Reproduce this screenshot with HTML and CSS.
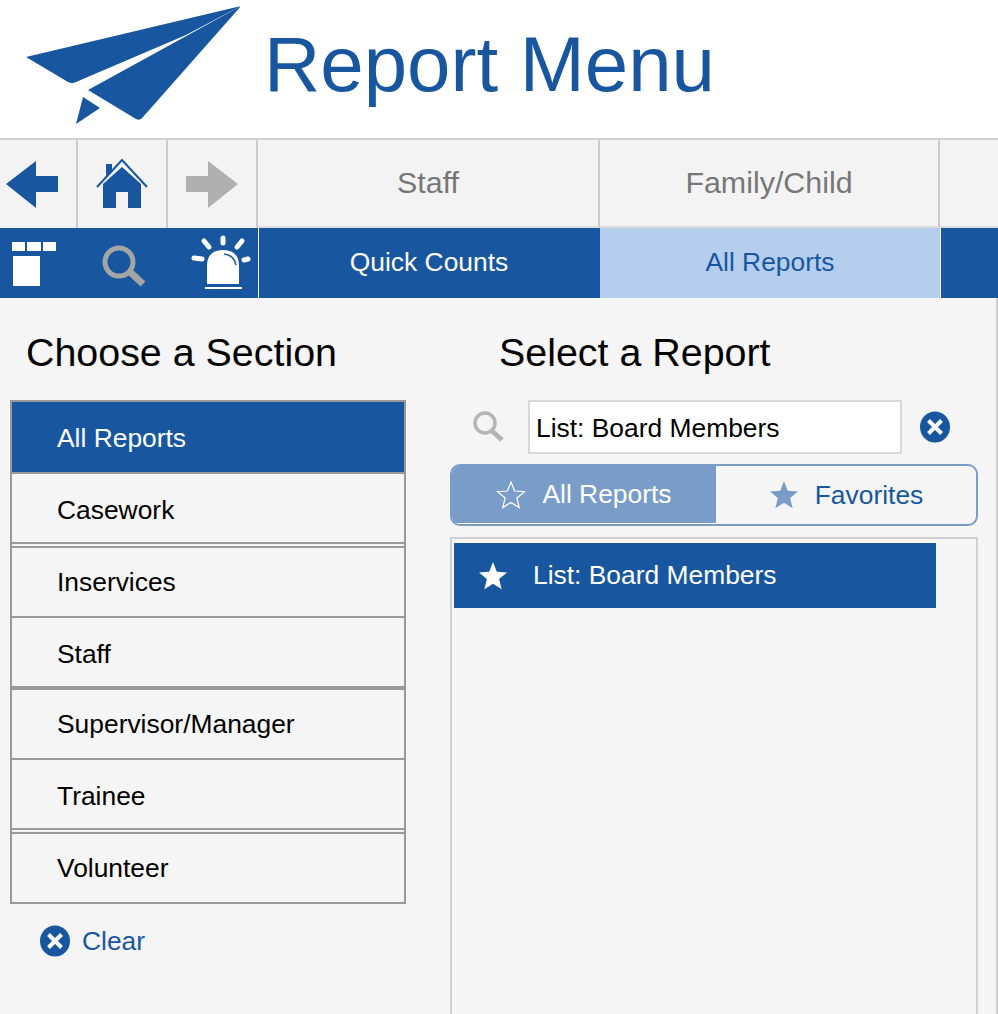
FILE: index.html
```html
<!DOCTYPE html>
<html lang="en">
<head>
  <meta charset="UTF-8" />
  <title>Report Menu</title>
  <link rel="stylesheet" href="styles.css">
</head>
<body>

  <header class="page-header">
    <svg class="logo" width="240" height="138" viewBox="0 0 240 138">
      <path d="M241 6 L26 57 L68 82 Q72 84 76 82 L186 35 Z" fill="#18579f" />
      <path d="M241 6 L88 90 L136 119 Q140 121 143 117 Z" fill="#18579f" />
      <path d="M83 97 L100 108 L76 124 Z" fill="#18579f" />
    </svg>
    <h1>Report Menu</h1>
  </header>

  <nav class="nav-top">
    <div class="nav-btn">
      <svg width="76" height="88" viewBox="0 140 76 88"><path d="M6 184 L36 161 V176 H58 V192 H36 V208 Z" fill="#18579f" /></svg>
    </div>
    <div class="nav-btn">
      <svg width="88" height="88" viewBox="78 140 88 88">
        <path d="M103 208 V184 L122 167 L141 184 V208 H128 V192 H116 V208 Z" fill="#18579f" />
        <path d="M97 187 L122 160 L147 187" fill="none" stroke="#18579f" stroke-width="2" />
        <path d="M106 164 H112 V172 L106 178 Z" fill="#18579f" />
      </svg>
    </div>
    <div class="nav-btn">
      <svg width="88" height="88" viewBox="168 140 88 88"><path d="M186 176 H208 V161 L238 184 L208 208 V192 H186 Z" fill="#b0b0b0" /></svg>
    </div>
    <div class="nav-tab">Staff</div>
    <div class="nav-tab">Family/Child</div>
    <div class="nav-tab nav-tab-end"></div>
  </nav>

  <nav class="nav-sub">
    <div class="tool">
      <svg width="78" height="70" viewBox="0 228 78 70" fill="#fff">
        <rect x="12" y="242" width="13" height="9" />
        <rect x="27" y="242" width="14" height="9" />
        <rect x="43" y="242" width="13" height="9" />
        <rect x="13" y="256" width="27" height="30" />
      </svg>
    </div>
    <div class="tool">
      <svg width="90" height="70" viewBox="78 228 90 70">
        <circle cx="119" cy="262" r="14" fill="none" stroke="#a5a5a5" stroke-width="5" />
        <path d="M130 272 L143 284" stroke="#a5a5a5" stroke-width="7" />
      </svg>
    </div>
    <div class="tool tool-last">
      <svg width="90" height="70" viewBox="168 228 90 70" fill="#fff">
        <path d="M207 284 V266 Q207 250 223 250 Q239 250 239 266 V284 Z" />
        <path d="M224 254 Q234 255 236 265" fill="none" stroke="#18579f" stroke-width="1.5" />
        <rect x="205" y="287" width="37" height="2" />
        <g stroke="#fff" stroke-width="5" stroke-linecap="round">
          <path d="M204 241 L209 247" />
          <path d="M223 238 V243" />
          <path d="M242 241 L237 247" />
          <path d="M194 258 L202 259" />
          <path d="M244 260 L248 259" />
        </g>
      </svg>
    </div>
    <div class="sub-tab">Quick Counts</div>
    <div class="sub-tab sub-tab-active">All Reports</div>
    <div></div>
  </nav>

  <main class="content">
    <section class="sections">
      <h2>Choose a Section</h2>
      <ul class="section-list">
        <li class="active">All Reports</li>
        <li class="double">Casework</li>
        <li>Inservices</li>
        <li class="thick">Staff</li>
        <li>Supervisor/Manager</li>
        <li class="double">Trainee</li>
        <li class="last">Volunteer</li>
      </ul>
      <div class="clear">
        <svg width="30" height="32" viewBox="0 0 30 32">
          <ellipse cx="15" cy="16" rx="15" ry="15.5" fill="#18579f" />
          <path d="M8.5 9.5 L21.5 22.5 M21.5 9.5 L8.5 22.5" stroke="#fff" stroke-width="4" />
        </svg>
        Clear
      </div>
    </section>

    <section class="reports">
      <h2>Select a Report</h2>
      <div class="search">
        <svg class="search-icon" width="36" height="36" viewBox="0 0 36 36">
          <circle cx="15" cy="14" r="10" fill="none" stroke="#b5b5b5" stroke-width="3.5" />
          <path d="M22 22 L32 31" stroke="#b5b5b5" stroke-width="5" />
        </svg>
        <div class="search-box">List: Board Members</div>
        <svg class="search-x" width="30" height="32" viewBox="0 0 30 32">
          <ellipse cx="15" cy="16" rx="15" ry="15.5" fill="#18579f" />
          <path d="M8.5 9.5 L21.5 22.5 M21.5 9.5 L8.5 22.5" stroke="#fff" stroke-width="4" />
        </svg>
      </div>
      <div class="tabs">
        <div class="tab tab-active">
          <svg width="30" height="30" viewBox="0 0 30 30"><path d="M15 2 L18.6 11 L28.5 11.7 L20.8 18 L23.3 27.6 L15 22.4 L6.7 27.6 L9.2 18 L1.5 11.7 L11.4 11 Z" fill="none" stroke="#fff" stroke-width="1.2" /></svg>
          All Reports
        </div>
        <div class="tab">
          <svg width="30" height="30" viewBox="0 0 30 30"><path d="M15 1 L18.8 10.8 L29 11.5 L21.1 18 L23.7 28.3 L15 22.7 L6.3 28.3 L8.9 18 L1 11.5 L11.2 10.8 Z" fill="#7a9cc9" /></svg>
          Favorites
        </div>
      </div>
      <div class="report-panel">
        <div class="report-row">
          <svg width="30" height="30" viewBox="0 0 30 30"><path d="M15 1 L18.8 10.8 L29 11.5 L21.1 18 L23.7 28.3 L15 22.7 L6.3 28.3 L8.9 18 L1 11.5 L11.2 10.8 Z" fill="#fff" /></svg>
          List: Board Members
        </div>
      </div>
    </section>
  </main>

</body>
</html>
```

FILE: styles.css
```css
* {
  margin: 0;
  padding: 0;
  box-sizing: border-box;
}

html, body {
  height: 100%;
  overflow: hidden;
}

body {
  display: flex;
  flex-direction: column;
  font-family: 'Liberation Sans', Arial, sans-serif;
  font-size: 26.4px;
  background-color: #f5f5f5;
  color: #000;
}

svg {
  display: block;
  flex-shrink: 0;
}

.page-header {
  height: 140px;
  display: flex;
  background: #fff;
  border-bottom: 2px solid #d0d0d0;
}

.page-header h1 {
  margin-left: 24px;
  font-size: 78px;
  font-weight: normal;
  line-height: 128px;
  color: #18579f;
}

.nav-top, .nav-sub {
  display: grid;
  grid-template-columns: 78px 90px 90px 342px 340px 1fr;
}

.nav-top {
  height: 88px;
  background: #f3f3f3;
}

.nav-btn {
  border-right: 2px solid #cccccc;
}

.nav-tab {
  display: flex;
  align-items: center;
  justify-content: center;
  padding-bottom: 2px;
  border-right: 2px solid #cccccc;
  border-bottom: 2px solid #dddddd;
  font-size: 30.4px;
  color: #777777;
}

.nav-tab-end {
  border-right: none;
}

.nav-sub {
  height: 70px;
  background: #18579f;
}

.tool-last {
  border-right: 1px solid #fff;
  width: 91px;
}

.sub-tab {
  display: flex;
  align-items: center;
  justify-content: center;
  padding-bottom: 2px;
  color: #fff;
}

.sub-tab-active {
  background: #b5ceee;
  color: #18579f;
  border-right: 1px solid #fff;
  width: 341px;
}

.content {
  flex: 1;
  display: flex;
  min-height: 0;
  border-right: 2px solid #d0d0d0;
}

h2 {
  font-size: 39.4px;
  font-weight: normal;
  line-height: 46px;
}

.sections {
  width: 450px;
  padding: 31px 0 0 10px;
}

.sections h2 {
  margin-left: 16px;
}

.section-list {
  width: 396px;
  margin-top: 25px;
  list-style: none;
  border: 2px solid #999999;
}

.section-list li {
  height: 70px;
  padding-left: 45px;
  line-height: 68px;
  border-bottom: 2px solid #999999;
}

.section-list li:first-child,
.section-list li.thick {
  height: 72px;
  line-height: 72px;
}

.section-list li.active {
  background: #18579f;
  color: #fff;
}

.section-list li.double {
  height: 74px;
  line-height: 72px;
  border-bottom: 6px double #999999;
}

.section-list li.thick {
  border-bottom-width: 4px;
}

.section-list li.last {
  height: 68px;
  border-bottom: none;
}

.clear {
  display: flex;
  align-items: center;
  gap: 12px;
  margin: 21px 0 0 30px;
  color: #18579f;
}

.reports {
  flex: 1;
  display: flex;
  flex-direction: column;
  padding-top: 31px;
  padding-right: 18px;
}

.reports h2 {
  margin-left: 49px;
}

.search {
  display: flex;
  align-items: center;
  margin-top: 25px;
  padding-left: 20px;
}

.search-icon {
  filter: blur(0.6px);
}

.search-box {
  width: 374px;
  height: 54px;
  margin-left: 22px;
  padding-left: 6px;
  line-height: 52px;
  background: #fff;
  border: 2px solid #d8d8d8;
}

.search-x {
  margin-left: 18px;
}

.tabs {
  display: flex;
  height: 62px;
  margin-top: 10px;
  border: 2px solid #7a9cc9;
  border-radius: 10px;
  overflow: hidden;
}

.tab {
  flex: 1;
  display: flex;
  align-items: center;
  justify-content: center;
  gap: 16px;
  color: #18579f;
}

.tab-active {
  flex: none;
  width: 264px;
  background: #7a9cc9;
  color: #fff;
  border-bottom: 1px solid #fff;
}

.report-panel {
  flex: 1;
  margin-top: 11px;
  padding: 4px 40px 0 2px;
  border: 2px solid #d0d0d0;
  border-bottom: none;
}

.report-row {
  display: flex;
  align-items: center;
  gap: 25px;
  height: 65px;
  padding-left: 24px;
  background: #18579f;
  color: #fff;
}
```
